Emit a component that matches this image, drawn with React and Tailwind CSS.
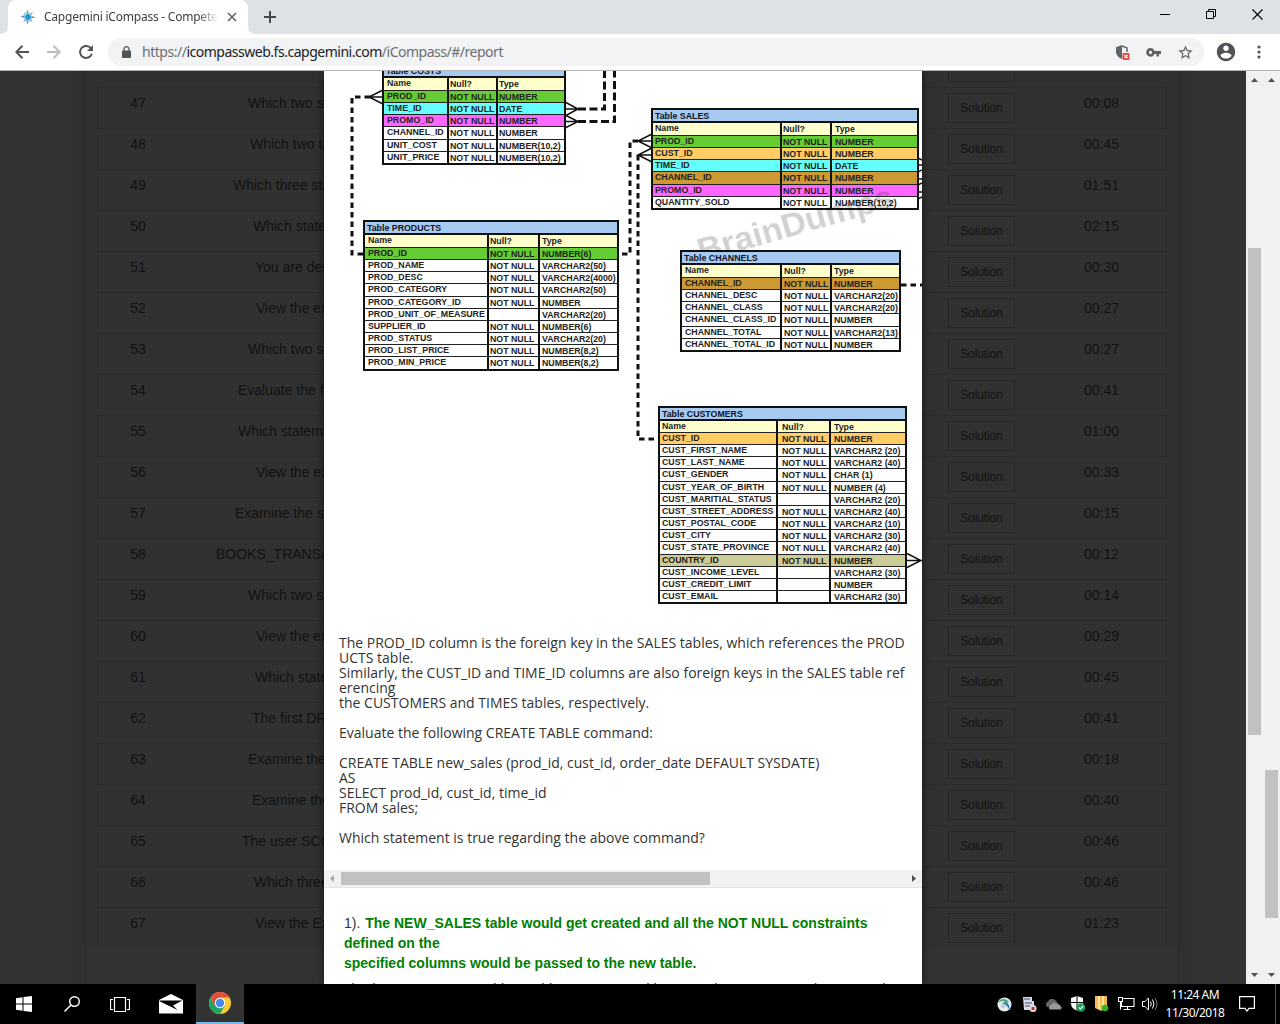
import React from "react";

const ROWS = [
  ["47", "Which two statements", "00:08", "pl-[70px]"],
  ["48", "Which two tasks", "00:45", "pl-[72px]"],
  ["49", "Which three statements", "01:51", "pl-[55px]"],
  ["50", "Which statement", "02:15", "pl-[75px]"],
  ["51", "You are designing", "00:30", "pl-[77px]"],
  ["52", "View the exhibit", "00:27", "pl-[78px]"],
  ["53", "Which two statements", "00:27", "pl-[70px]"],
  ["54", "Evaluate the following", "00:41", "pl-[60px]"],
  ["55", "Which statement", "01:00", "pl-[60px]"],
  ["56", "View the exhibit", "00:33", "pl-[78px]"],
  ["57", "Examine the structure", "00:15", "pl-[57px]"],
  ["58", "BOOKS_TRANSACTIONS", "00:12", "pl-[38px]"],
  ["59", "Which two statements", "00:14", "pl-[70px]"],
  ["60", "View the exhibit", "00:29", "pl-[78px]"],
  ["61", "Which statement", "00:45", "pl-[77px]"],
  ["62", "The first DROP", "00:41", "pl-[74px]"],
  ["63", "Examine the structure", "00:18", "pl-[70px]"],
  ["64", "Examine the structure", "00:40", "pl-[74px]"],
  ["65", "The user SCOTT", "00:46", "pl-[64px]"],
  ["66", "Which three statements", "00:46", "pl-[76px]"],
  ["67", "View the Exhibit", "01:23", "pl-[77px]"],
];

const NN = "NOT NULL";
const G = "bg-[#66cc33]";
const C = "bg-[#66ffff]";
const P = "bg-[#ff66ff]";
const O = "bg-[#ffcc66]";
const B = "bg-[#cc9933]";
const K = "bg-[#cccc99]";

const COSTS = [
  ["PROD_ID", NN, "NUMBER", G],
  ["TIME_ID", NN, "DATE", C],
  ["PROMO_ID", NN, "NUMBER", P],
  ["CHANNEL_ID", NN, "NUMBER"],
  ["UNIT_COST", NN, "NUMBER(10,2)"],
  ["UNIT_PRICE", NN, "NUMBER(10,2)"],
];
const SALES = [
  ["PROD_ID", NN, "NUMBER", G],
  ["CUST_ID", NN, "NUMBER", O],
  ["TIME_ID", NN, "DATE", C],
  ["CHANNEL_ID", NN, "NUMBER", B],
  ["PROMO_ID", NN, "NUMBER", P],
  ["QUANTITY_SOLD", NN, "NUMBER(10,2)"],
];
const PRODUCTS = [
  ["PROD_ID", NN, "NUMBER(6)", G],
  ["PROD_NAME", NN, "VARCHAR2(50)"],
  ["PROD_DESC", NN, "VARCHAR2(4000)"],
  ["PROD_CATEGORY", NN, "VARCHAR2(50)"],
  ["PROD_CATEGORY_ID", NN, "NUMBER"],
  ["PROD_UNIT_OF_MEASURE", "", "VARCHAR2(20)"],
  ["SUPPLIER_ID", NN, "NUMBER(6)"],
  ["PROD_STATUS", NN, "VARCHAR2(20)"],
  ["PROD_LIST_PRICE", NN, "NUMBER(8,2)"],
  ["PROD_MIN_PRICE", NN, "NUMBER(8,2)"],
];
const CHANNELS = [
  ["CHANNEL_ID", NN, "NUMBER", B],
  ["CHANNEL_DESC", NN, "VARCHAR2(20)"],
  ["CHANNEL_CLASS", NN, "VARCHAR2(20)"],
  ["CHANNEL_CLASS_ID", NN, "NUMBER"],
  ["CHANNEL_TOTAL", NN, "VARCHAR2(13)"],
  ["CHANNEL_TOTAL_ID", NN, "NUMBER"],
];
const CUSTOMERS = [
  ["CUST_ID", NN, "NUMBER", O],
  ["CUST_FIRST_NAME", NN, "VARCHAR2 (20)"],
  ["CUST_LAST_NAME", NN, "VARCHAR2 (40)"],
  ["CUST_GENDER", NN, "CHAR (1)"],
  ["CUST_YEAR_OF_BIRTH", NN, "NUMBER (4)"],
  ["CUST_MARITIAL_STATUS", "", "VARCHAR2 (20)"],
  ["CUST_STREET_ADDRESS", NN, "VARCHAR2 (40)"],
  ["CUST_POSTAL_CODE", NN, "VARCHAR2 (10)"],
  ["CUST_CITY", NN, "VARCHAR2 (30)"],
  ["CUST_STATE_PROVINCE", NN, "VARCHAR2 (40)"],
  ["COUNTRY_ID", NN, "NUMBER", K],
  ["CUST_INCOME_LEVEL", "", "VARCHAR2 (30)"],
  ["CUST_CREDIT_LIMIT", "", "NUMBER"],
  ["CUST_EMAIL", "", "VARCHAR2 (30)"],
];

function Entity({ title, rows, place, cols, pads, rowH = "h-[12.17px]", headH = "h-[12px]" }) {
  return (
    <div className={`absolute border-2 border-[#111] bg-white text-[8.8px] leading-[12px] font-bold whitespace-nowrap text-[#222] ${place}`}>
      <div className="flex h-[13px] items-center border-b-2 border-[#111] bg-[#a6caf0] pt-px pl-[2px] text-[#112]">Table {title}</div>
      <div className={`grid bg-[#ffffcc] ${headH} ${cols}`}>
        <span className={`-mt-px ${pads[0]}`}>Name</span>
        <span className={`border-l-2 border-[#111] ${pads[1]}`}>Null?</span>
        <span className={`border-l-2 border-[#111] ${pads[2]}`}>Type</span>
      </div>
      {rows.map((r) => (
        <div key={r[0]} className={`grid border-t border-[#222] ${rowH} ${cols} ${r[3] || "bg-white"}`}>
          <span className={`-mt-px ${pads[0]}`}>{r[0]}</span>
          <span className={`border-l-2 border-[#111] ${pads[1]}`}>{r[1]}</span>
          <span className={`border-l-2 border-[#111] ${pads[2]}`}>{r[2]}</span>
        </div>
      ))}
    </div>
  );
}

function Diagram() {
  return (
    <div className="relative h-[564px] shrink-0 overflow-hidden font-['Liberation_Sans',sans-serif] blur-[0.3px]">
      <svg className="absolute inset-0" width="598" height="565" viewBox="324 71 598 565" fill="none" stroke="#111" strokeWidth="3">
        <g strokeDasharray="5.500 4">
          <path d="M370 97H352V254H364" />
          <path d="M578 109H604.500V71" strokeDasharray="8 3.500" />
          <path d="M578 121.500H614.500V71" strokeDasharray="8 3.500" />
          <path d="M638 141H630V254H618" />
          <path d="M638 155V439H659" />
          <path d="M901 285H922" />
        </g>
        <g strokeWidth="1.500">
          <path d="M383 90L369 97L383 104M369 97H383" />
          <path d="M565 102L578 109L565 116M565 109H580" />
          <path d="M565 115L578 121.500L565 128M565 121.500H580" />
          <path d="M652 134L638 141L652 148M638 141H652" />
          <path d="M652 148L638 155L652 162M638 155H652" />
          <path d="M907 553.500L921 560.500L907 567.500M907 560.500H922" />
          <path d="M918 158L922 160M918 165H922M918 172L922 170M918 179H922M918 185L922 183M918 192H922M918 199L922 197" />
        </g>
      </svg>
      <Entity title="COSTS" rows={COSTS} place="left-[58px] top-[-8px] w-[184px]" cols="grid-cols-[63px_49px_1fr]" pads={["pl-[3px]", "pl-px", "pl-px"]} />
      <Entity title="SALES" rows={SALES} place="left-[327px] top-[37px] w-[268px]" cols="grid-cols-[127px_50px_1fr]" pads={["pl-[2px]", "pl-px", "pl-[3px]"]} />
      <div className="absolute top-[132px] left-[370px] origin-center rotate-[-16deg] text-[34px] leading-[40px] font-bold text-black/18">BrainDumps</div>
      <Entity title="PRODUCTS" rows={PRODUCTS} place="left-[39px] top-[149px] w-[256px]" cols="grid-cols-[122px_51px_1fr]" pads={["pl-[3px]", "pl-px", "pl-[2px]"]} />
      <Entity title="CHANNELS" rows={CHANNELS} place="left-[356px] top-[179px] w-[221px]" cols="grid-cols-[98px_50px_1fr]" pads={["pl-[3px]", "pl-[2px]", "pl-[2px]"]} />
      <Entity title="CUSTOMERS" rows={CUSTOMERS} headH="h-[11px]" place="left-[334px] top-[335px] w-[249px]" cols="grid-cols-[116px_53px_1fr]" pads={["pl-[2px]", "pl-[4px]", "pl-[3px]"]} />
    </div>
  );
}

const QUESTION = `The PROD_ID column is the foreign key in the SALES tables, which references the PROD
UCTS table.
Similarly, the CUST_ID and TIME_ID columns are also foreign keys in the SALES table ref
erencing
the CUSTOMERS and TIMES tables, respectively.

Evaluate the following CREATE TABLE command:

CREATE TABLE new_sales (prod_id, cust_id, order_date DEFAULT SYSDATE)
AS
SELECT prod_id, cust_id, time_id
FROM sales;

Which statement is true regarding the above command?`;

function Modal() {
  return (
    <div className="absolute inset-y-0 left-[324px] flex w-[598px] flex-col overflow-hidden bg-white shadow-[0_0_8px_rgba(0,0,0,0.6)]">
      <Diagram />
      <pre className="h-[235px] shrink-0 pl-[15px] font-['Open_Sans',sans-serif] text-[14px] leading-[15px] text-[#333]">{QUESTION}</pre>
      <div className="flex h-[17px] shrink-0 items-center justify-between bg-[#f1f1f1] pr-[6px] pl-[6px]">
        <svg width="4" height="7" viewBox="0 0 4 7"><path d="M4 0V7L0 3.500Z" fill="#a3a3a3" /></svg>
        <div className="mr-auto ml-[7px] h-[13px] w-[369px] bg-[#c1c1c1]" />
        <svg width="4" height="7" viewBox="0 0 4 7"><path d="M0 0V7L4 3.500Z" fill="#505050" /></svg>
      </div>
      <div className="shrink-0 border-t border-[#e5e5e5] pt-[25px] pl-[20px] font-['Liberation_Sans',sans-serif] text-[14px] leading-[20px] whitespace-nowrap text-[#333]">
        <p>1). <b className="ml-px text-[#008000]">The NEW_SALES table would get created and all the NOT NULL constraints<br />defined on the<br />specified columns would be passed to the new table.</b></p>
        <p className="mt-[6px]">2). The NEW_SALES table would not get created because the DEFAULT value cannot be</p>
      </div>
    </div>
  );
}

function Report() {
  return (
    <div className="flex min-w-0 flex-1 bg-[#333] font-['Liberation_Sans',sans-serif] text-[14px] text-[#111]">
      <div className="w-[65px] shrink-0" />
      <div className="w-[22px] shrink-0 bg-linear-to-r from-[#323232] to-[#2e2e2e]" />
      <div className="h-[876px] w-[1090px] shrink-0 overflow-hidden bg-[#313131] px-[10px]">
        <div className="flex h-[16px] items-end border-x border-[#2d2d2d]">
          <div className="ml-[850px] h-[30px] w-[67px] -translate-y-[5px] border border-[#272727]" />
        </div>
        {ROWS.map(([n, q, t, pad]) => (
          <div key={n} className="flex h-[41px] border-x border-t border-[#2b2b2b]">
            <div className="w-[80px] shrink-0 pt-[5px] text-center leading-[20px]">{n}</div>
            <div className={`w-[770px] shrink-0 overflow-hidden pt-[5px] leading-[20px] whitespace-nowrap ${pad}`}>{q}</div>
            <div className="mt-[5px] flex h-[30px] w-[67px] shrink-0 items-center justify-center border border-[#272727] text-[12px] tracking-[-0.1px]">Solution</div>
            <div className="w-[151px] shrink-0 pt-[5px] pl-[69px] leading-[20px]">{t}</div>
          </div>
        ))}
      </div>
      <div className="w-[22px] shrink-0 bg-linear-to-r from-[#2e2e2e] to-[#323232]" />
    </div>
  );
}

function Scrollbar({ thumb }) {
  return (
    <div className="flex w-[17px] shrink-0 flex-col items-center bg-[#f1f1f1]">
      <svg className="mt-[7px] shrink-0" width="7" height="4" viewBox="0 0 7 4"><path d="M0 4H7L3.500 0Z" fill="#505050" /></svg>
      <div className={`w-[13px] shrink-0 bg-[#c1c1c1] ${thumb}`} />
      <svg className="mt-auto mb-[7px] shrink-0" width="7" height="4" viewBox="0 0 7 4"><path d="M0 0H7L3.500 4Z" fill="#505050" /></svg>
    </div>
  );
}

function TabStrip() {
  return (
    <div className="flex h-[34px] items-end bg-[#dee1e6] font-['Noto_Sans',sans-serif]">
      <svg width="8" height="8" viewBox="0 0 8 8"><path d="M8 0V8H0Q8 8 8 0Z" fill="#fff" /></svg>
      <div className="flex h-[34px] w-[240px] items-center rounded-t-[8px] bg-white pl-[12px]">
        <svg className="shrink-0" width="16" height="16" viewBox="0 0 16 16">
          <path d="M7 .5L9 5L13 3L11 7L15.500 8L11 9.500L12.500 13L9 11.500L7.500 15.500L6.500 11.500L3 13L5 9.500L.5 7.500L5 6.500L4 3L6.500 4.800Z" fill="#7fa9c8" />
          <path d="M7 .5L9 5.500L8 8ZM15.500 8L10 9.500L8 8ZM7.500 15.500L6.500 10.500L8 8ZM.5 7.500L6 6L8 8Z" fill="#3f7ba8" />
          <circle cx="8" cy="8" r="3.400" fill="#fff" /><circle cx="8" cy="8" r="2.900" fill="#159ad6" />
        </svg>
        <div className="ml-[8px] w-[175px] shrink-0 overflow-hidden mask-r-from-88% text-[12px] leading-[18px] tracking-[-0.23px] whitespace-nowrap text-[#3c4043]">Capgemini iCompass - Competer</div>
        <svg className="ml-[8px] shrink-0" width="10" height="10" viewBox="0 0 10 10"><path d="M1 1L9 9M9 1L1 9" stroke="#5f6368" strokeWidth="1.600" /></svg>
      </div>
      <svg width="8" height="8" viewBox="0 0 8 8"><path d="M0 0V8H8Q0 8 0 0Z" fill="#fff" /></svg>
      <svg className="mb-[11px] ml-[8px]" width="12" height="12" viewBox="0 0 12 12"><path d="M6 0V12M0 6H12" stroke="#45494d" strokeWidth="2" /></svg>
      <div className="mr-[17px] mb-[14px] ml-auto flex items-center gap-[36px]">
        <svg width="10" height="11" viewBox="0 0 10 11"><path d="M0 5.500H10" stroke="#000" /></svg>
        <svg width="10" height="11" viewBox="0 0 10 11" fill="none" stroke="#000"><path d="M.5 2.500H7.500V9.500H.5ZM2.500 2.500V.5H9.500V7.500H7.500" /></svg>
        <svg width="11" height="11" viewBox="0 0 11 11"><path d="M.5 .5L10.500 10.500M10.500 .5L.5 10.500" stroke="#000" strokeWidth="1.100" /></svg>
      </div>
    </div>
  );
}

function Toolbar() {
  return (
    <div className="flex h-[37px] items-center border-b border-[#b3b3b3] bg-white pl-[15px]">
      <svg width="14" height="14" viewBox="0 0 14 14" fill="none" stroke="#505357" strokeWidth="2"><path d="M14 7H1.500M7.500 .8L1.300 7L7.500 13.200" /></svg>
      <svg className="ml-[18px]" width="14" height="14" viewBox="0 0 14 14" fill="none" stroke="#b9bbbd" strokeWidth="2"><path d="M0 7H12.500M6.500 .8L12.700 7L6.500 13.200" /></svg>
      <svg className="ml-[18px]" width="14" height="14" viewBox="0 0 14 14"><path d="M12 3.500A6 6 0 1 0 12.800 8.800" fill="none" stroke="#505357" strokeWidth="2" /><path d="M14 0V6H8Z" fill="#505357" /></svg>
      <div className="ml-[15px] flex h-[28px] w-[1096px] items-center rounded-full bg-[#f1f3f4] pl-[14px]">
        <svg width="9" height="12" viewBox="0 0 9 12"><rect y="4.500" width="9" height="7.500" rx="1" fill="#505357" /><path d="M2 5V3A2.500 2.300 0 0 1 7 3V5" fill="none" stroke="#505357" strokeWidth="1.200" /></svg>
        <div className="ml-[11px] font-['Noto_Sans',sans-serif] text-[14px] leading-[20px] tracking-[-0.485px] text-[#6b6f73]">https://<span className="text-[#202124]">icompassweb.fs.capgemini.com</span>/iCompass/#/report</div>
        <div className="mr-[10px] ml-auto flex items-center">
          <svg width="14" height="15" viewBox="0 0 14 15"><path d="M6 0L0 2.300V6.500C0 10 2.500 12.500 6 14Z" fill="#5f6368" /><path d="M6 1L11 2.900V7" fill="none" stroke="#5f6368" strokeWidth="1.500" /><rect x="6.500" y="8" width="7" height="7" rx="1" fill="#e04a3f" /><path d="M8.500 10L11.500 13M11.500 10L8.500 13" stroke="#fff" strokeWidth="1.100" /></svg>
          <svg className="ml-[16px]" width="15" height="9" viewBox="0 0 15 9"><path fillRule="evenodd" d="M4.500 0A4.300 4.300 0 0 1 8.500 3H15V6H13V8.500H10.500V6H8.500A4.300 4.300 0 1 1 4.500 0ZM4.500 2.800A1.600 1.600 0 1 0 4.500 6A1.600 1.600 0 1 0 4.500 2.800Z" fill="#5f6368" /></svg>
          <svg className="ml-[16px]" width="17" height="17" viewBox="0 0 24 24"><path fill="#5f6368" d="M22 9.240l-7.190-.62L12 2 9.190 8.630 2 9.240l5.460 4.730L5.820 21 12 17.270 18.180 21l-1.630-7.030L22 9.240zM12 15.400l-3.760 2.270 1-4.280-3.320-2.880 4.380-.38L12 6.100l1.710 4.040 4.380.38-3.320 2.880 1 4.280L12 15.400z" /></svg>
        </div>
      </div>
      <svg className="ml-[11px]" width="22" height="22" viewBox="0 0 24 24"><path fill="#505357" d="M12 2C6.480 2 2 6.480 2 12s4.480 10 10 10 10-4.480 10-10S17.520 2 12 2zm0 3c1.660 0 3 1.340 3 3s-1.340 3-3 3-3-1.340-3-3 1.340-3 3-3zm0 14.200c-2.500 0-4.710-1.280-6-3.220.03-1.990 4-3.080 6-3.080 1.990 0 5.970 1.090 6 3.080-1.290 1.940-3.500 3.220-6 3.220z" /></svg>
      <svg className="ml-[20px]" width="4" height="14" viewBox="0 0 4 14" fill="#505357"><circle cx="2" cy="2" r="1.600" /><circle cx="2" cy="7" r="1.600" /><circle cx="2" cy="12" r="1.600" /></svg>
    </div>
  );
}

function Taskbar() {
  return (
    <div className="flex h-[40px] items-center bg-black">
      <svg className="ml-[16px]" width="16" height="16" viewBox="0 0 16 16" fill="#fff"><path d="M0 2.200L6.500 1.300V7.500H0ZM7.500 1.100L16 0V7.500H7.500ZM0 8.500H6.500V14.700L0 13.800ZM7.500 8.500H16V16L7.500 14.900Z" /></svg>
      <svg className="ml-[32px]" width="16" height="16" viewBox="0 0 16 16" fill="none" stroke="#fff" strokeWidth="1.400"><circle cx="10.500" cy="5.500" r="4.800" /><path d="M7 9L.5 15.500" /></svg>
      <svg className="ml-[30px]" width="20" height="15" viewBox="0 0 20 15" fill="none" stroke="#fff"><path d="M4.500 .5H15.500V14.500H4.500ZM3 2.500H.5V12.500H3M17 2.500H19.500V12.500H17" strokeWidth="1.200" /></svg>
      <svg className="ml-[29px]" width="24" height="20" viewBox="0 0 24 20"><path d="M0 6L12 0L24 6V19.500H0Z" fill="#fff" /><path d="M0 6.500H23.500L14 11.500L18.500 16L1 7.500Z" fill="#000" /></svg>
      <div className="ml-[13px] flex h-[40px] w-[48px] items-center justify-center border-b-2 border-[#76b9ed] bg-[#333]">
        <svg width="22" height="22" viewBox="0 0 22 22">
          <circle cx="11" cy="11" r="11" fill="#fc3" />
          <path d="M11 11L6.200 13.700L1.500 5.500A11 11 0 0 0 11 22L15.800 13.700Z" fill="#1da362" />
          <path d="M1.500 5.500A11 11 0 0 1 20.500 5.500H11L6.200 13.700Z" fill="#de4f42" />
          <circle cx="11" cy="11" r="5.200" fill="#fff" /><circle cx="11" cy="11" r="4.200" fill="#4688f1" />
        </svg>
      </div>
      <div className="mr-[4px] ml-auto flex items-center">
        <svg width="15" height="15" viewBox="0 0 15 15"><circle cx="7.500" cy="7.500" r="7" fill="#e6edf0" /><path d="M1 6C3 1 9 1 12 5L9 6C7 3 4 4 1 6Z" fill="#4ca66b" /><path d="M5 6C8 4 14 6 12 13C11 9 8 7 5 6Z" fill="#247fbd" /><circle cx="6" cy="9" r="2" fill="#b4cad8" /></svg>
        <svg className="ml-[10px]" width="15" height="15" viewBox="0 0 15 15"><path d="M1 0H10V4H12V13H2Z" fill="#d7dbe6" /><path d="M2 2H8M3 6H10M3 9H8" stroke="#7a7da0" strokeWidth="1.500" /><circle cx="11" cy="11.500" r="3.500" fill="#e8dada" /><rect x="9.500" y="10" width="3" height="3" fill="#d32d2d" /></svg>
        <svg className="ml-[8px]" width="17" height="11" viewBox="0 0 17 11"><path d="M2.500 8A3 3 0 0 1 3 2.500A4.500 4.500 0 0 1 11 2A4 4 0 0 1 13 5Z" fill="#666" /><path d="M5 10.500A2.500 2.500 0 0 1 6 6A3.500 3.500 0 0 1 12 5A3 3 0 0 1 15.500 7A2 2 0 0 1 15.500 10.500Z" fill="#999" /></svg>
        <svg className="ml-[8px]" width="16" height="16" viewBox="0 0 16 16"><path d="M7 0L13 2V7C13 11 10 13 7 14.500C3 13 1 11 1 7V2Z" fill="#fff" /><path d="M7 0V14M1 6.500H13" stroke="#000" /><circle cx="11" cy="11.500" r="4.300" fill="#18a05a" /><path d="M9 11.500L10.500 13L13.200 10" fill="none" stroke="#fff" strokeWidth="1.200" /></svg>
        <svg className="ml-[9px]" width="14" height="16" viewBox="0 0 14 16"><path d="M0 0H12V11L6 15L0 12Z" fill="#edbd4d" /><path d="M4 0V13M8 0V13" stroke="#fbe49a" strokeWidth="2" /><circle cx="10" cy="12" r="3.200" fill="#31b526" /></svg>
        <svg className="ml-[9px]" width="17" height="14" viewBox="0 0 17 14" fill="none" stroke="#fff"><path d="M5.500 1.500H16V9.500H3.500V5M.5 .5H4.500V4.500H.5ZM2.500 4.500V12.500M9.500 9.500V12.500M5.500 12.500H12.500" strokeWidth="1.100" /></svg>
        <svg className="ml-[7px]" width="17" height="14" viewBox="0 0 17 14" fill="none" stroke="#fff"><path d="M.5 4.500H3L6.500 1V13L3 9.500H.5Z" /><path d="M8.500 4.500Q10 7 8.500 9.500M10.500 2.500Q13.500 7 10.500 11.500" /><path d="M13 1Q17 7 13 13" stroke="#777" /></svg>
        <div className="ml-[6px] flex w-[60px] flex-col items-center font-['Noto_Sans',sans-serif] text-[12px] leading-[18px] tracking-[-0.5px] whitespace-nowrap text-white"><span>11:24 AM</span><span>11/30/2018</span></div>
        <svg className="ml-[14px]" width="16" height="16" viewBox="0 0 16 16" fill="none" stroke="#fff" strokeWidth="1.200"><path d="M.6 .6H15.400V12.400H10L8 15L6 12.400H.6Z" /></svg>
        <div className="ml-[20px] h-[40px] w-px bg-[#555]" />
      </div>
    </div>
  );
}

export default function App() {
  return (
    <div className="flex h-[1024px] w-[1280px] flex-col overflow-hidden">
      <TabStrip />
      <Toolbar />
      <div className="relative flex min-h-0 flex-1 overflow-hidden">
        <Report />
        <Scrollbar thumb="mt-[166px] h-[487px]" />
        <Scrollbar thumb="mt-[688px] h-[148px]" />
        <Modal />
      </div>
      <Taskbar />
    </div>
  );
}
